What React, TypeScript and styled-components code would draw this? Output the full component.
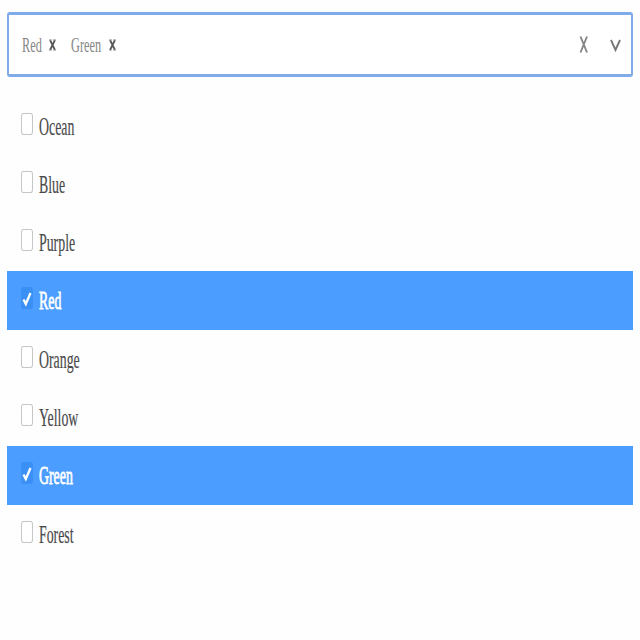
import React, { useState } from "react";
import styled, { createGlobalStyle } from "styled-components";

const GlobalStyle = createGlobalStyle`
  *, *::before, *::after { box-sizing: border-box; }
  body {
    margin: 0;
    background: #fefefe;
    font-family: "Liberation Serif", "Times New Roman", serif;
  }
`;

const Page = styled.main`
  width: 640px;
  height: 640px;
  padding: 12px 7px 0;
  overflow: hidden;
`;

const SelectBox = styled.div`
  display: flex;
  align-items: center;
  height: 65px;
  padding: 0 10px 0 13px;
  background: #fff;
  border: solid #80abe8;
  border-width: 3.5px 2px;
  border-radius: 3px;
`;

const Tags = styled.div`
  display: flex;
  flex: 1;
  gap: 13px;
`;

const Tag = styled.div<{ $width: number }>`
  display: grid;
  grid-template-columns: ${(p) => p.$width}px 10px;
  column-gap: 7px;
  align-items: center;
`;

const TagText = styled.span`
  width: max-content;
  font-size: 22px;
  line-height: 26px;
  color: #858585;
  transform: scaleX(0.56);
  transform-origin: left;
`;

const IconButton = styled.button`
  display: flex;
  padding: 0;
  border: 0;
  background: none;
`;

const Controls = styled.div`
  display: flex;
  align-items: center;
  gap: 21px;
`;

const OptionList = styled.div`
  display: flex;
  flex-direction: column;
  padding-top: 19.5px;
`;

const Option = styled.div<{ $selected: boolean }>`
  display: flex;
  align-items: flex-start;
  gap: 6px;
  height: 58.3px;
  padding: 16px 0 0 14px;
  color: ${(p) => (p.$selected ? "#fff" : "#484848")};
  background: ${(p) => (p.$selected ? "#4b9dff" : "transparent")};
  -webkit-text-stroke: ${(p) => (p.$selected ? "0.8px #fff" : "0.2px #606060")};
`;

const Check = styled.span<{ $selected: boolean }>`
  display: flex;
  align-items: center;
  justify-content: center;
  width: 12px;
  height: 22px;
  border: 1px solid ${(p) => (p.$selected ? "#3b90f6" : "#c6c6c6")};
  border-width: ${(p) => (p.$selected ? "1px" : "1.5px 1px")};
  border-radius: 2px / 4px;
  background: ${(p) => (p.$selected ? "#3b90f6" : "#fff")};
`;

const OptionText = styled.span`
  width: max-content;
  margin-top: 1px;
  font-size: 24.5px;
  line-height: 25px;
  transform: scaleX(0.565);
  transform-origin: left;
`;

const SmallCross = () => (
  <svg width="10" height="14" viewBox="0 0 10 14" fill="none">
    <path d="M2 2L7 12M7 2L2 12" stroke="#555" strokeWidth="1.7" />
    <path d="M1 2h3M5 2h3M1 12h3M5 12h3" stroke="#999" strokeWidth="1" />
  </svg>
);

const Cross = () => (
  <svg width="10" height="20" viewBox="0 0 10 20" fill="none">
    <path d="M1.5 1.5L8 17.5M8 1.5L1.5 17.5" stroke="#858585" strokeWidth="1.9" />
  </svg>
);

const Chevron = () => (
  <svg width="11" height="14" viewBox="0 0 11 14" fill="none">
    <path d="M1 2L5.5 12L10 2" stroke="#777" strokeWidth="1.9" />
  </svg>
);

const CheckMark = () => (
  <svg width="10" height="18" viewBox="0 0 10 18" fill="none">
    <path d="M1.5 10.5L3.8 15L8.5 4" stroke="#fff" strokeWidth="2.3" />
  </svg>
);

const tagWidths: Record<string, number> = { Red: 19, Green: 30 };
const colours = ["Ocean", "Blue", "Purple", "Red", "Orange", "Yellow", "Green", "Forest"];

export default function App() {
  const [selected, setSelected] = useState<string[]>(["Red", "Green"]);
  const toggle = (name: string) =>
    setSelected((s) => (s.includes(name) ? s.filter((n) => n !== name) : [...s, name]));

  return (
    <>
      <GlobalStyle />
      <Page>
        <SelectBox>
          <Tags>
            {selected.map((name) => (
              <Tag key={name} $width={tagWidths[name] ?? 32}>
                <TagText>{name}</TagText>
                <IconButton aria-label={`Remove ${name}`} onClick={() => toggle(name)}>
                  <SmallCross />
                </IconButton>
              </Tag>
            ))}
          </Tags>
          <Controls>
            <IconButton aria-label="Clear all" onClick={() => setSelected([])}>
              <Cross />
            </IconButton>
            <Chevron />
          </Controls>
        </SelectBox>
        <OptionList role="listbox" aria-multiselectable="true">
          {colours.map((name) => {
            const on = selected.includes(name);
            return (
              <Option key={name} role="option" aria-selected={on} $selected={on} onClick={() => toggle(name)}>
                <Check $selected={on}>{on && <CheckMark />}</Check>
                <OptionText>{name}</OptionText>
              </Option>
            );
          })}
        </OptionList>
      </Page>
    </>
  );
}
